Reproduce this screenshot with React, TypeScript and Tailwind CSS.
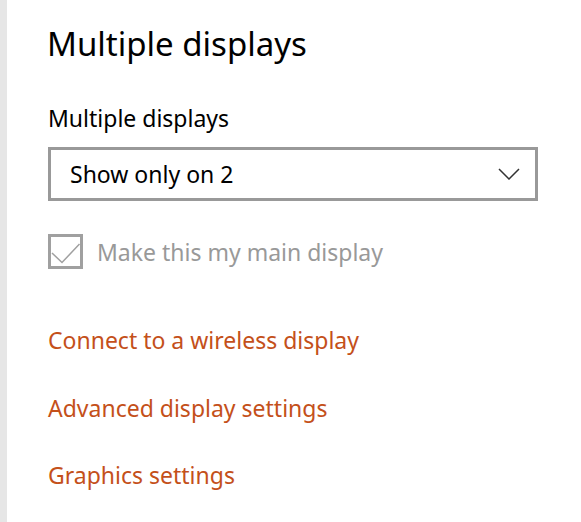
import React from "react";

export default function App() {
  const font = { fontFamily: '"Noto Sans", "Open Sans", sans-serif' };
  return (
    <div className="flex w-[581px] h-[522px] bg-white overflow-hidden" style={font}>
      <div className="w-[7px] shrink-0 bg-[#e6e6e6]" />
      <div className="flex flex-col pl-[41px] pt-[22px]">
        <h1 className="text-[33px] leading-[44px] text-black font-normal -ml-[1px]">Multiple displays</h1>
        <div className="mt-[36px] text-[23px] leading-[32px] text-black">Multiple displays</div>
        <button className="mt-[13px] flex items-center justify-between w-[490px] h-[54px] border-[3px] border-[#999999] pl-[19px] pr-[15px] text-left">
          <span className="text-[23px] leading-[32px] text-black">Show only on 2</span>
          <svg width="22" height="12" viewBox="0 0 22 12" fill="none">
            <path d="M1 1 L11 11 L21 1" stroke="#333" strokeWidth="1.5" />
          </svg>
        </button>
        <label className="mt-[33px] flex items-center gap-[14px]">
          <span className="relative w-[35px] h-[35px] border-[3px] border-[#a0a0a0]">
            <svg className="absolute -left-[3px] -top-[3px]" width="35" height="35" viewBox="0 0 35 35" fill="none">
              <path d="M4 19 L14 28.5 L31.5 10" stroke="#a0a0a0" strokeWidth="1.5" />
            </svg>
          </span>
          <span className="text-[23px] leading-[32px] text-[#999999]">Make this my main display</span>
        </label>
        <div className="mt-[55px] flex flex-col gap-[35.5px] text-[23px] leading-[32px] text-[#c4501a]">
          <span>Connect to a wireless display</span>
          <span>Advanced display settings</span>
          <span>Graphics settings</span>
        </div>
      </div>
    </div>
  );
}
